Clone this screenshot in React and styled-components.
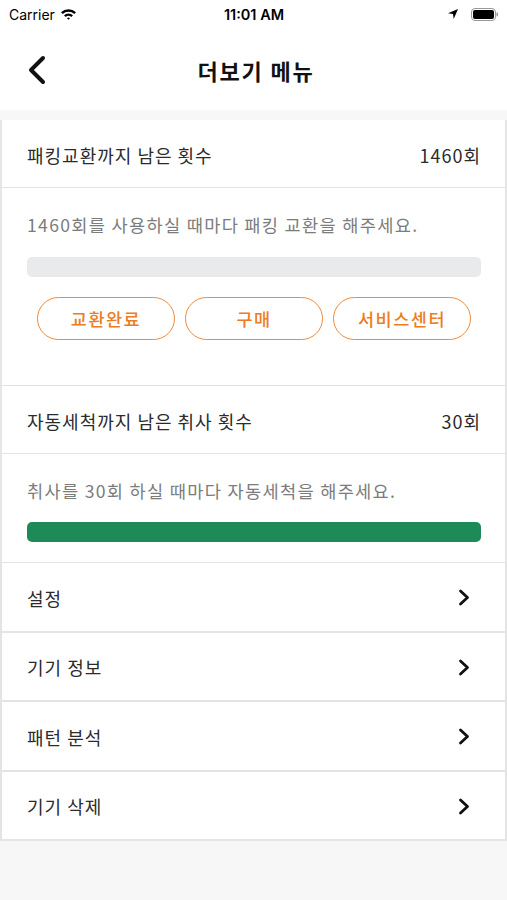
import React from "react";
import styled, { createGlobalStyle } from "styled-components";

const Global = createGlobalStyle`
  html, body { margin: 0; padding: 0; background: #f7f7f7; }
  body { font-family: "Noto Sans CJK KR", "Noto Sans", sans-serif; }
  * { box-sizing: border-box; }
`;

const Screen = styled.div`
  width: 507px;
  min-height: 900px;
  background: #f7f7f7;
  display: flex;
  flex-direction: column;
`;

const StatusBar = styled.div`
  height: 28px;
  background: #fff;
  display: grid;
  grid-template-columns: 1fr auto 1fr;
  align-items: center;
  padding: 0 8px 0 9px;
  font-family: "Inter", "Liberation Sans", sans-serif;
  color: #000;
`;

const StatusLeft = styled.div`
  display: flex;
  align-items: center;
  gap: 5px;
  font-size: 14px;
`;

const StatusTime = styled.div`
  font-size: 14.5px;
  font-weight: 600;
`;

const StatusRight = styled.div`
  display: flex;
  justify-content: flex-end;
  align-items: center;
  gap: 12px;
`;

const NavBar = styled.div`
  height: 82px;
  background: #fff;
  display: grid;
  grid-template-columns: 60px 1fr 60px;
  align-items: center;
`;

const BackButton = styled.div`
  display: flex;
  align-items: center;
  padding-left: 26px;
  padding-top: 2px;
`;

const Title = styled.h1`
  margin: 0;
  text-align: center;
  font-size: 22px;
  font-weight: 700;
  letter-spacing: 1.8px;
  color: #111;
  padding: 2px 0 0 5px;
`;

const Content = styled.div`
  margin-top: 10px;
  display: flex;
  flex-direction: column;
`;

const Card = styled.div`
  background: #fff;
  border-left: 2px solid #e6e6e6;
  border-right: 2px solid #e6e6e6;
`;

const InfoRow = styled.div`
  height: 68px;
  display: flex;
  align-items: center;
  justify-content: space-between;
  padding: 2px 25px 0 25px;
  border-bottom: 1.5px solid #e4e4e4;
  font-size: 18px;
  letter-spacing: 1px;
  color: #2b2b2b;
`;

const Value = styled.span`
  margin-right: -1px;
`;

const Detail = styled.div`
  padding: ${(p) => p.$pad};
  border-bottom: 1.5px solid #e4e4e4;
  display: flex;
  flex-direction: column;
`;

const Desc = styled.p`
  margin: 0;
  font-size: 17.6px;
  letter-spacing: 1.3px;
  color: #7c7c7c;
  line-height: 26px;
`;

const Bar = styled.div`
  margin-top: ${(p) => p.$gap};
  height: 20px;
  border-radius: 5px;
  background: ${(p) => p.$color};
`;

const ButtonRow = styled.div`
  margin-top: 20px;
  padding: 0 11px 0 10px;
  display: grid;
  grid-template-columns: repeat(3, 138px);
  gap: 10px;
`;

const OutlineButton = styled.button`
  height: 43px;
  border: 1.5px solid #ee8a3c;
  border-radius: 22px;
  background: #fff;
  color: #ec7d22;
  font-family: "Noto Sans CJK KR", sans-serif;
  font-size: 17.5px;
  font-weight: 500;
  letter-spacing: 1.5px;
  padding: 0;
`;

const MenuRow = styled.div`
  height: 69.5px;
  background: #fff;
  border: 2px solid #e4e4e4;
  border-top: none;
  display: flex;
  align-items: center;
  justify-content: space-between;
  padding: 2px 35px 0 25px;
  font-size: 18px;
  letter-spacing: 1px;
  color: #2b2b2b;
`;

const Chevron = () => (
  <svg width="12" height="17" viewBox="0 0 12 17">
    <path d="M2.5 2 L9.5 8.5 L2.5 15" fill="none" stroke="#111" strokeWidth="2.8" strokeLinecap="round" strokeLinejoin="round" />
  </svg>
);

export default function App() {
  const menus = ["설정", "기기 정보", "패턴 분석", "기기 삭제"];
  return (
    <Screen>
      <Global />
      <StatusBar>
        <StatusLeft>
          Carrier
          <svg width="17" height="12" viewBox="0 0 17 12">
            <path d="M1 4.2 A11 11 0 0 1 16 4.2 L14.3 6 A8.6 8.6 0 0 0 2.7 6 Z" fill="#000" />
            <path d="M4 7.2 A6.6 6.6 0 0 1 13 7.2 L11.3 9 A4.2 4.2 0 0 0 5.7 9 Z" fill="#000" />
            <path d="M7 10.2 A2.2 2.2 0 0 1 10 10.2 L8.5 11.8 Z" fill="#000" />
          </svg>
        </StatusLeft>
        <StatusTime>11:01 AM</StatusTime>
        <StatusRight>
          <svg width="12" height="12" viewBox="0 0 12 12">
            <path d="M11 1 L1 5.3 L6 6 L6.7 11 Z" fill="#000" />
          </svg>
          <svg width="28" height="13" viewBox="0 0 28 13">
            <rect x="0.5" y="0.5" width="24" height="12" rx="3.5" fill="none" stroke="#999" />
            <rect x="2" y="2" width="21" height="9" rx="2" fill="#000" />
            <rect x="25.5" y="4.5" width="1.5" height="4" rx="0.7" fill="#999" />
          </svg>
        </StatusRight>
      </StatusBar>
      <NavBar>
        <BackButton>
          <svg width="22" height="30" viewBox="0 0 22 30">
            <path d="M17 3 L5 15 L17 27" fill="none" stroke="#111" strokeWidth="4" strokeLinecap="round" strokeLinejoin="round" />
          </svg>
        </BackButton>
        <Title>더보기 메뉴</Title>
        <div />
      </NavBar>
      <Content>
        <Card>
          <InfoRow>
            <span>패킹교환까지 남은 횟수</span>
            <Value>1460회</Value>
          </InfoRow>
          <Detail $pad="24px 24px 45px 25px">
            <Desc>1460회를 사용하실 때마다 패킹 교환을 해주세요.</Desc>
            <Bar $color="#e9eaec" $gap="19px" />
            <ButtonRow>
              <OutlineButton>교환완료</OutlineButton>
              <OutlineButton>구매</OutlineButton>
              <OutlineButton>서비스센터</OutlineButton>
            </ButtonRow>
          </Detail>
          <InfoRow>
            <span>자동세척까지 남은 취사 횟수</span>
            <Value>30회</Value>
          </InfoRow>
          <Detail $pad="24px 24px 20px 25px">
            <Desc>취사를 30회 하실 때마다 자동세척을 해주세요.</Desc>
            <Bar $color="#1e8a57" $gap="18px" />
          </Detail>
        </Card>
        {menus.map((m) => (
          <MenuRow key={m}>
            <span>{m}</span>
            <Chevron />
          </MenuRow>
        ))}
      </Content>
    </Screen>
  );
}
